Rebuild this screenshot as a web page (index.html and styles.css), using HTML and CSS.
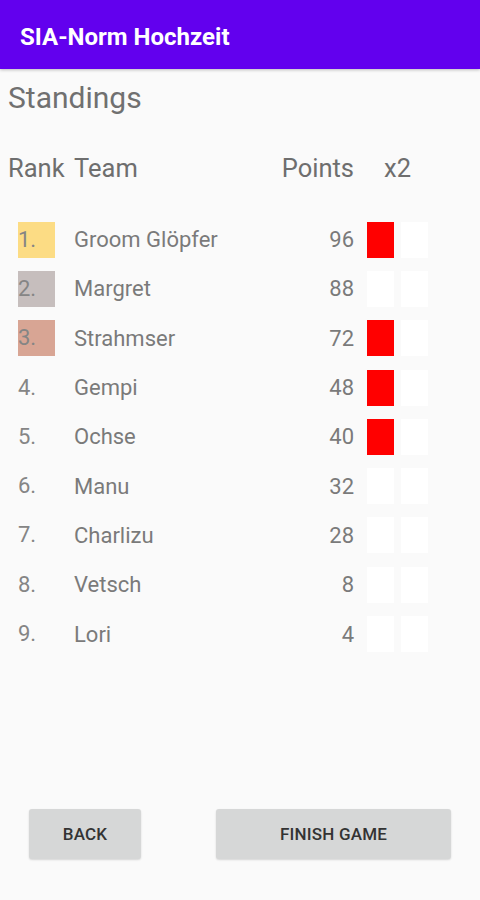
FILE: index.html
```html
<!DOCTYPE html>
<html>
<head>
<meta charset="utf-8">
<link rel="stylesheet" href="styles.css">
</head>
<body>
<div class="app">
  <header class="appbar">SIA-Norm Hochzeit</header>
  <main class="content">
    <h1 class="title">Standings</h1>
    <div class="head">
      <span class="h-rank">Rank</span>
      <span class="h-team">Team</span>
      <span class="h-points">Points</span>
      <span class="h-x2">x2</span>
    </div>
    <div class="rows">
      <div class="row"><span class="rank gold">1.</span><span class="team">Groom Glöpfer</span><span class="pts">96</span><span class="x2"><i class="box on"></i><i class="box"></i></span></div>
      <div class="row"><span class="rank silver">2.</span><span class="team">Margret</span><span class="pts">88</span><span class="x2"><i class="box"></i><i class="box"></i></span></div>
      <div class="row"><span class="rank bronze">3.</span><span class="team">Strahmser</span><span class="pts">72</span><span class="x2"><i class="box on"></i><i class="box"></i></span></div>
      <div class="row"><span class="rank">4.</span><span class="team">Gempi</span><span class="pts">48</span><span class="x2"><i class="box on"></i><i class="box"></i></span></div>
      <div class="row"><span class="rank">5.</span><span class="team">Ochse</span><span class="pts">40</span><span class="x2"><i class="box on"></i><i class="box"></i></span></div>
      <div class="row"><span class="rank">6.</span><span class="team">Manu</span><span class="pts">32</span><span class="x2"><i class="box"></i><i class="box"></i></span></div>
      <div class="row"><span class="rank">7.</span><span class="team">Charlizu</span><span class="pts">28</span><span class="x2"><i class="box"></i><i class="box"></i></span></div>
      <div class="row"><span class="rank">8.</span><span class="team">Vetsch</span><span class="pts">8</span><span class="x2"><i class="box"></i><i class="box"></i></span></div>
      <div class="row"><span class="rank">9.</span><span class="team">Lori</span><span class="pts">4</span><span class="x2"><i class="box"></i><i class="box"></i></span></div>
    </div>
  </main>
  <footer class="actions">
    <button class="btn back">BACK</button>
    <button class="btn finish">FINISH GAME</button>
  </footer>
</div>
</body>
</html>
```
FILE: styles.css
```css
* { box-sizing: border-box; }
html, body { margin: 0; padding: 0; }
body {
  background: #fafafa;
  font-family: Roboto, "Liberation Sans", sans-serif;
  color: #757575;
}
.app {
  display: flex;
  flex-direction: column;
  min-height: 900px;
}
.appbar {
  height: 69px;
  background: #6200ee;
  color: #fff;
  font-size: 24px;
  font-weight: 700;
  display: flex;
  align-items: center;
  padding-left: 20px;
  padding-top: 4px;
  box-shadow: 0 1px 3px rgba(0,0,0,0.25);
}
.content {
  padding-left: 8px;
}
.title {
  margin: 0;
  font-size: 30px;
  font-weight: 400;
  color: #707070;
  height: 58px;
  line-height: 58px;
}
.head {
  display: grid;
  grid-template-columns: 66px 1fr auto 126px;
  align-items: center;
  height: 82px;
  font-size: 25.5px;
  color: #6e6e6e;
}
.h-x2 { padding-left: 30px; }
.rows {
  padding-top: 6px;
}
.row {
  display: grid;
  grid-template-columns: 66px 1fr auto 126px;
  align-items: center;
  height: 49.3px;
  font-size: 22px;
}
.rank {
  margin-left: 10px;
  width: 37px;
  height: 36px;
  line-height: 36px;
  color: #858585;
}
.gold { background: #fcdc84; }
.silver { background: #c6bebd; }
.bronze { background: #d8a594; }
.team { color: #7a7a7a; }
.pts { color: #7a7a7a; text-align: right; }
.x2 {
  display: flex;
  gap: 7px;
  padding-left: 13px;
}
.box {
  width: 27px;
  height: 36px;
  background: #fff;
  display: block;
}
.box.on { background: #ff0000; }
.actions {
  margin-top: auto;
  display: flex;
  padding: 0 29px 41px 29px;
  justify-content: space-between;
}
.btn {
  height: 50px;
  border: none;
  border-radius: 3px;
  background: #d6d7d7;
  color: #333;
  font-family: Roboto, "Liberation Sans", sans-serif;
  font-size: 17px;
  font-weight: 500;
  letter-spacing: 0.2px;
  box-shadow: 0 1px 2px rgba(0,0,0,0.15);
}
.back { width: 112px; }
.finish { width: 235px; }
```
